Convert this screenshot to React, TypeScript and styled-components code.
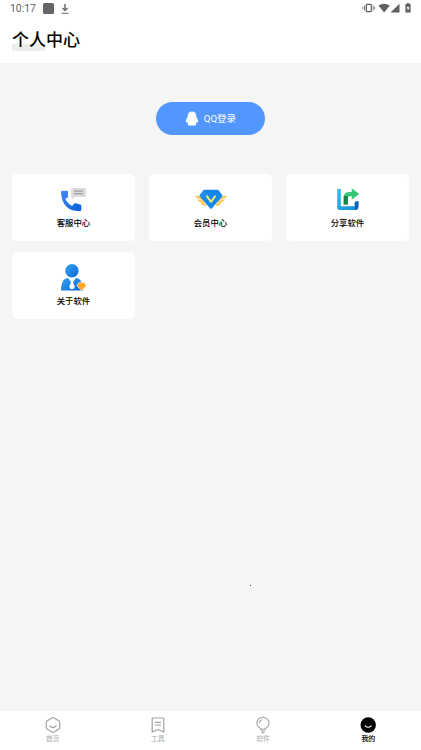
import React from "react";
import styled, { createGlobalStyle } from "styled-components";

const GlobalStyle = createGlobalStyle`
  * { box-sizing: border-box; }
  body { margin: 0; background: #f5f5f5; font-family: Roboto, "Noto Sans CJK SC", sans-serif; }
`;

const Screen = styled.div`
  width: 100%;
  height: 100vh;
  min-height: 750px;
  display: flex;
  flex-direction: column;
  background: #f5f5f5;
  color: #000;
`;

const StatusBar = styled.div`
  height: 17px;
  padding: 0 9px 0 10px;
  display: flex;
  align-items: center;
  justify-content: space-between;
  background: #fff;
  color: #606060;
  font-size: 10.4px;
  line-height: 17px;
  svg { display: block; }
`;

const StatusGroup = styled.div<{ $gap: number }>`
  display: flex;
  align-items: center;
  gap: ${(p) => p.$gap}px;
`;

const SystemGroup = styled.div`
  height: 17px;
  padding-top: 2px;
`;

const Header = styled.header`
  height: 46px;
  padding: 11px 12px 0;
  background: #fff;
`;

const Title = styled.h1`
  margin: 0;
  width: 68px;
  height: 23px;
  font-size: 17px;
  line-height: 25px;
  font-weight: 500;
  white-space: nowrap;
  background: linear-gradient(#eeeeee, #eeeeee) 0 100% / 33px 7px no-repeat;
`;

const Content = styled.main`
  flex: 1;
  padding: 39px 12px 0;
  display: flex;
  flex-direction: column;
  align-items: center;
  position: relative;
`;

const LoginButton = styled.button`
  width: 109px;
  height: 33px;
  padding: 0;
  border: 0;
  border-radius: 17px;
  background: #5297ff;
  color: #fff;
  display: flex;
  align-items: center;
  justify-content: center;
  gap: 5px;
  font-family: inherit;
  font-size: 9.6px;
  line-height: 14px;
`;

const LoginLabel = styled.span`
  padding-top: 1px;
`;

const CardGrid = styled.div`
  width: 100%;
  margin-top: 39px;
  display: grid;
  grid-template-columns: repeat(3, 1fr);
  gap: 11px 14px;
`;

const Card = styled.div`
  height: 67px;
  padding-top: 11px;
  border-radius: 5px;
  background: #fff;
  display: flex;
  flex-direction: column;
  align-items: center;
  svg { display: block; }
`;

const CardLabel = styled.span`
  margin-top: 2px;
  font-size: 8.4px;
  line-height: 12px;
  font-weight: 500;
`;

const Speck = styled.i`
  position: absolute;
  left: 250px;
  top: 522px;
  width: 1px;
  height: 1px;
  background: #3c4890;
`;

const NavBar = styled.nav`
  height: 39px;
  padding-top: 5px;
  background: #fff;
  display: grid;
  grid-template-columns: repeat(4, 1fr);
`;

const NavItem = styled.div<{ $active?: boolean }>`
  display: flex;
  flex-direction: column;
  align-items: center;
  color: ${(p) => (p.$active ? "#000" : "#a0a2a4")};
  svg { display: block; }
`;

const NavLabel = styled.span<{ $active?: boolean }>`
  margin-top: 1px;
  font-size: 7px;
  line-height: 9px;
  color: ${(p) => (p.$active ? "#000" : "#adadad")};
  font-weight: ${(p) => (p.$active ? 500 : 400)};
`;

const DownloadIcon = () => (
  <svg width="8" height="10" viewBox="0 0 8 10" fill="none" stroke="#707070">
    <path d="M4 0v6M1.500 4 4 6.500 6.500 4" strokeWidth="1.500" />
    <path d="M.5 9.300h7" strokeWidth="1.100" />
  </svg>
);

const SquareIcon = () => (
  <svg width="11" height="11" viewBox="0 0 11 11">
    <rect width="11" height="11" rx="1.500" fill="#666" />
  </svg>
);

const SystemIcons = () => (
  <svg width="50" height="12" viewBox="0 0 50 12" fill="#606060">
    <rect x="4.300" y="2.300" width="5" height="7.400" rx=".8" fill="none" stroke="#606060" strokeWidth="1.200" />
    <path d="M2.500 3.500v5M11.100 3.500v5M.8 4.800v2.400M12.600 4.800v2.400" stroke="#707070" strokeWidth=".9" />
    <path d="M16.500 3.600Q22.200-.2 27.800 3.600L22.200 10.500Z" />
    <path d="M37.500 1.800v8.700h-9Z" />
    <path d="M43.400 2h1.500V1h2.200v1h1.500v8.600h-5.200Z" />
    <path d="m46.300 3.800-2 2.800h1.500v2l2-3h-1.500Z" fill="#fff" />
  </svg>
);

const PenguinIcon = () => (
  <svg width="14" height="15" viewBox="0 0 14 15" fill="#fff">
    <path d="M7 .5C4.400.5 2.700 2.400 2.700 4.700v1.400C1.500 7.600.8 9.200.9 10.900c.1 1 .8.7 1.300-.2.2.9.6 1.600 1.200 2.100-1.300.7-.8 1.700.8 1.700h5.600c1.600 0 2.100-1 .8-1.700.6-.5 1-1.200 1.200-2.100.5.900 1.200 1.200 1.300.2.1-1.700-.6-3.300-1.800-4.800V4.700C11.300 2.400 9.600.5 7 .5Z" />
  </svg>
);

const PhoneIcon = () => (
  <svg width="34" height="30" viewBox="0 0 34 30">
    <defs>
      <linearGradient id="phone" x1="0" y1="0" x2="1" y2="1">
        <stop offset="0" stopColor="#4388fa" />
        <stop offset="1" stopColor="#0861d4" />
      </linearGradient>
    </defs>
    <path d="M4.500 6 10 5.700q.9 0 .9.900v5.200q0 .8-.7 1.200l-2 .6c1.500 3.800 3.700 5.800 6.800 7.400l2.200-2.400q.5-.6 1.200-.3l5 1.300q.9.200.9 1.100v4.500q-.1.800-1 .8C12 26.600 4.500 20.500 4 7q0-.8.5-1Z" fill="url(#phone)" />
    <path d="M15 3h13q1 0 1 1v7q0 1-1 1H18.200L15.500 14.500 15 12q-1 0-1-1V4q0-1 1-1Z" fill="#dcdcdc" />
    <path d="M17 6h9M17 8.800h9" stroke="#777" strokeWidth=".8" />
  </svg>
);

const MemberIcon = () => (
  <svg width="34" height="30" viewBox="0 0 34 30">
    <g fill="#fac64c">
      <path d="M1 10.500 9 12v3.200L3.500 13.300Q1.700 12.500 1 10.500ZM3 14.200l7 1.500v2.500l-4-1.200q-2-.8-3-2.800ZM6 17.800l6 1v2.500L8.600 20Z" />
      <path d="M33 10.500 25 12v3.200l5.500-1.900q1.800-.8 2.500-2.800ZM31 14.200l-7 1.500v2.500l4-1.200q2-.8 3-2.800ZM28 17.800l-6 1v2.500l3.400-1.300Z" />
    </g>
    <path d="M10.500 4.800h13q.8 0 1.300.6l3.400 4.500q.6.8 0 1.700L18 23.300q-1 1.200-2 0L5.800 11.600q-.7-.9-.1-1.700L9.200 5.400q.5-.6 1.300-.6Z" fill="#1687e6" />
    <path d="m10 5 7 7-10 1-1.600-2.600Z" fill="#37a8fa" opacity=".25" />
    <path d="m13 11.300 4 5.500 4-5.500" fill="none" stroke="#e9e77f" strokeWidth="2" strokeLinecap="round" strokeLinejoin="round" />
  </svg>
);

const ShareIcon = () => (
  <svg width="34" height="30" viewBox="0 0 34 30">
    <defs>
      <linearGradient id="share" x1="0" y1="0" x2="1" y2="1">
        <stop offset="0" stopColor="#35c1e9" />
        <stop offset="1" stopColor="#118bd3" />
      </linearGradient>
    </defs>
    <path d="M6.200 4h3.600v17.200h14v-4.500l3.600-.7v6.200q0 2.800-2.800 2.800H9q-2.800 0-2.800-2.800Z" fill="url(#share)" />
    <path d="m23.800 17 3.600-.8v4.500q0 3.800-3.600 3.800Z" fill="#1261b5" />
    <path d="M12.700 19.500v-7.300q0-5.200 6-5.200h2V3.200l7.500 5.900-7.500 5.700v-3.500H18q-1.200 0-1.200 2v6.200Z" fill="#35c675" />
    <path d="M12.700 11h4.100v8.500h-4.100Z" fill="#168344" />
  </svg>
);

const PersonIcon = () => (
  <svg width="34" height="30" viewBox="0 0 34 30">
    <defs>
      <linearGradient id="person" x1="0" y1="0" x2="1" y2="1">
        <stop offset="0" stopColor="#33a5f3" />
        <stop offset="1" stopColor="#0c67d4" />
      </linearGradient>
    </defs>
    <circle cx="14.900" cy="7.800" r="6.700" fill="url(#person)" />
    <path d="M10 15h10C24 16.500 26 20.500 26 27.500H4C4.300 20.500 5.500 16.500 10 15Z" fill="url(#person)" />
    <path d="m11 15 3 4-1 2.500h4L16 19l3-4Z" fill="#fff" />
    <circle cx="15" cy="23.500" r="2.600" fill="#fff" />
    <path d="M22.300 19.300h4.400l2.400 2.600q.5.600 0 1.200l-3.700 3.800q-.8.700-1.600 0l-3.600-3.800q-.5-.6 0-1.200Z" fill="#ffa82b" stroke="#fff" strokeWidth=".6" />
  </svg>
);

const HomeIcon = () => (
  <svg width="18" height="18" viewBox="0 0 18 18" fill="none" stroke="currentColor" strokeWidth="1.200" strokeLinejoin="round">
    <path d="M8 2q1-.6 2 0l4.700 2.700q1 .6 1 1.700v5.200q0 1.100-1 1.700L10 16q-1 .6-2 0l-4.700-2.700q-1-.6-1-1.700V6.400q0-1.100 1-1.700Z" />
    <path d="M5.800 10q3.200 3 6.400 0" strokeLinecap="round" />
  </svg>
);

const ToolsIcon = () => (
  <svg width="18" height="18" viewBox="0 0 18 18" fill="none" stroke="currentColor" strokeWidth="1.200">
    <path d="M3.200 2h11.600v14L9 13.500 3.200 16Z" strokeLinejoin="round" />
    <path d="M6 6.300h6M6 9h6" />
  </svg>
);

const BulbIcon = () => (
  <svg width="18" height="18" viewBox="0 0 18 18" fill="none" stroke="currentColor" strokeWidth="1.100">
    <path d="M6.700 13.200v-.8Q3 10.500 3 7.200a6 6 0 0 1 12 0q0 3.300-3.700 5.200v.8ZM6.800 15h4.400M7.500 16.700h3" />
    <path d="M5.400 7q.2-2.600 2.600-3.200" strokeLinecap="round" />
  </svg>
);

const MineIcon = () => (
  <svg width="18" height="18" viewBox="0 0 18 18">
    <circle cx="9.200" cy="9" r="7.700" fill="#000" />
    <path d="M6.200 9.800q3 3 6 0" fill="none" stroke="#fff" strokeWidth="1.100" strokeLinecap="round" />
  </svg>
);

const services = [
  { label: "客服中心", Icon: PhoneIcon },
  { label: "会员中心", Icon: MemberIcon },
  { label: "分享软件", Icon: ShareIcon },
  { label: "关于软件", Icon: PersonIcon },
];

const tabs = [
  { label: "首页", Icon: HomeIcon },
  { label: "工具", Icon: ToolsIcon },
  { label: "软件", Icon: BulbIcon },
  { label: "我的", Icon: MineIcon, active: true },
];

export default function App() {
  return (
    <>
      <GlobalStyle />
      <Screen>
        <StatusBar>
          <StatusGroup $gap={7}>
            <span>10:17</span>
            <SquareIcon />
            <DownloadIcon />
          </StatusGroup>
          <SystemGroup>
            <SystemIcons />
          </SystemGroup>
        </StatusBar>
        <Header>
          <Title>个人中心</Title>
        </Header>
        <Content>
          <LoginButton>
            <PenguinIcon />
            <LoginLabel>QQ登录</LoginLabel>
          </LoginButton>
          <CardGrid>
            {services.map(({ label, Icon }) => (
              <Card key={label}>
                <Icon />
                <CardLabel>{label}</CardLabel>
              </Card>
            ))}
          </CardGrid>
          <Speck />
        </Content>
        <NavBar>
          {tabs.map(({ label, Icon, active }) => (
            <NavItem key={label} $active={active}>
              <Icon />
              <NavLabel $active={active}>{label}</NavLabel>
            </NavItem>
          ))}
        </NavBar>
      </Screen>
    </>
  );
}
